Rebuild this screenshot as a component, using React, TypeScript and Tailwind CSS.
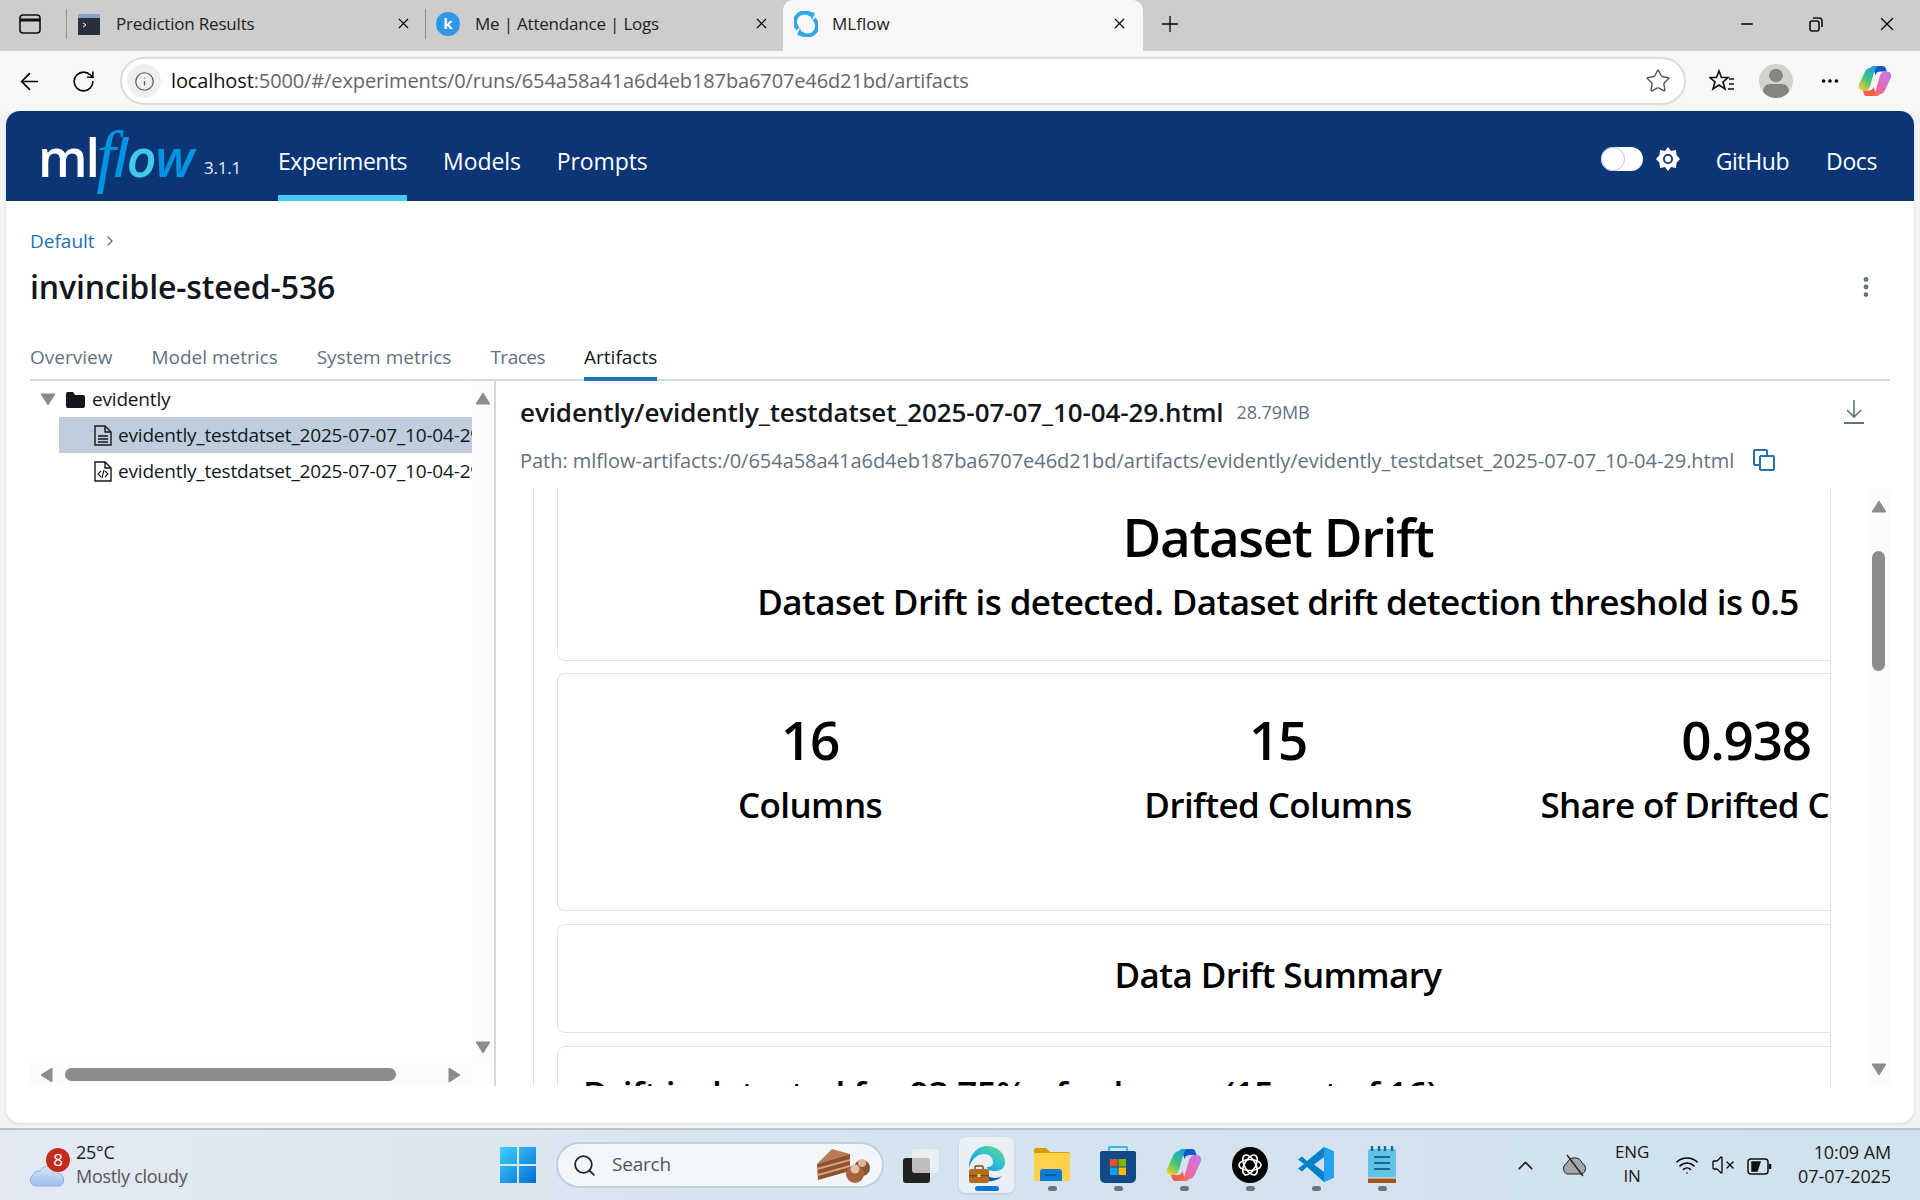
import { ArrowLeft, RotateCw, Info, Star, Plus, X, Minus, MoreHorizontal, Search, ChevronUp, ChevronRight, MoreVertical, Wifi, VolumeX } from "lucide-react";

const font = "font-['Open_Sans',sans-serif]";

const Tri = ({ dir, cls = "" }: { dir: "up" | "down" | "left" | "right"; cls?: string }) => {
  const pts = { up: "0,12 7,1 14,12", down: "0,1 14,1 7,12", left: "12,0 12,14 1,7", right: "1,0 1,14 12,7" }[dir];
  return (
    <svg width="14" height="14" viewBox="0 0 14 14" className={cls}>
      <polygon points={pts} fill="#8c8c8c" stroke="#8c8c8c" strokeLinejoin="round" />
    </svg>
  );
};

const Tab = ({ icon, title, width }: { icon: React.ReactNode; title: string; width: string }) => (
  <div className={`flex items-center h-full pb-[4px] ${width}`}>
    <div className="w-px h-[30px] bg-[#8f8f8f]" />
    <div className="ml-[10px] w-[24px] h-[24px] flex items-center justify-center">{icon}</div>
    <span className="ml-[15px] text-[17px] tracking-[-0.2px] text-[#222]">{title}</span>
    <X className="ml-auto mr-[13px] text-black" size={17} strokeWidth={1.6} />
  </div>
);

const TabStrip = () => (
  <div className="h-[51px] bg-[#cdcdcd] flex items-center shrink-0">
    <div className="w-[66px] flex justify-center pr-[6px] pb-[4px]">
      <svg width="22" height="20" viewBox="0 0 22 20" fill="none" stroke="#111" strokeWidth="1.6">
        <rect x="1" y="1" width="20" height="18" rx="3" />
        <path d="M1 6h20" strokeWidth="3" />
      </svg>
    </div>
    <Tab
      width="w-[359px]"
      title="Prediction Results"
      icon={
        <svg width="24" height="24" viewBox="0 0 24 24">
          <rect x="1" y="2" width="22" height="21" fill="#2b2f3a" />
          <rect x="1" y="2" width="22" height="4" fill="#7fa2d0" />
          <path d="M6 11l3 2-3 2" stroke="#fff" fill="none" />
        </svg>
      }
    />
    <Tab
      width="w-[358px]"
      title="Me | Attendance | Logs"
      icon={
        <div className="w-[24px] h-[24px] rounded-full bg-[#2f97e8] text-white text-[15px] font-bold flex items-center justify-center">k</div>
      }
    />
    <div className="w-[360px] h-full bg-[#f7f7f7] rounded-t-[10px] flex items-center pl-[11px] pb-[4px]">
      <svg width="24" height="26" viewBox="0 0 24 26" fill="none" stroke="#31a8e6" strokeWidth="4">
        <path d="M4 18A9.500 9.500 0 0 1 17 4" />
        <path d="M20 8A9.500 9.500 0 0 1 7 22" />
        <path d="M14 0l7 2-3 7z" fill="#31a8e6" stroke="none" />
        <path d="M10 26l-7-2 3-7z" fill="#31a8e6" stroke="none" />
      </svg>
      <span className="ml-[14px] text-[17px] text-[#222]">MLflow</span>
      <X className="ml-auto mr-[15px] text-black" size={17} strokeWidth={1.6} />
    </div>
    <Plus className="ml-[14px] mb-[4px] text-black" size={26} strokeWidth={1.2} />
    <div className="ml-auto flex items-center pb-[4px]">
      <Minus className="mr-[52px]" size={18} strokeWidth={2} />
      <svg width="16" height="16" viewBox="0 0 16 16" fill="none" stroke="#111" strokeWidth="1.6" className="mr-[52px]">
        <rect x="2" y="5" width="9" height="10" rx="2" />
        <path d="M5 2h6a3 3 0 0 1 3 3v6" />
      </svg>
      <X className="mr-[22px]" size={22} strokeWidth={1.4} />
    </div>
  </div>
);

const CopilotMark = ({ size = 34 }: { size?: number }) => (
  <svg width={size} height={size} viewBox="0 0 36 34">
    <path d="M16 3c1-1.500 3-2 5-2h5c2 0 3 1 3.500 3l1 3H24c-3 0-4.500 1-5.500 4z" fill="#0f56c8" />
    <path d="M13 3c1-1.500 2.500-2 4-2h6c-3 0-4.500 2-5.500 5L13 22c-1 3-3 5-6 5H5c-3 0-5-3-4-6L7 8c1-2.500 3-5 6-5z" fill="url(#cp1)" />
    <path d="M19 31c-1 1.500-2.500 2-4 2H9c-1.500 0-2.500-1-3-3l-1-3h6c3 0 4.500-1 5.500-4z" fill="#f2604a" />
    <path d="M23 31c-1 1.500-2.500 2-4 2h-6c3 0 4.500-2 5.500-5L23 12c1-3 3-5 6-5h2c3 0 5 3 4 6l-6 13c-1 2.500-3 5-6 5z" fill="url(#cp2)" />
  </svg>
);

const AddressRow = () => (
  <div className="h-[60px] bg-[#f7f7f7] flex items-center shrink-0">
    <ArrowLeft className="ml-[16px]" size={27} strokeWidth={1.5} />
    <RotateCw className="ml-[28px]" size={25} strokeWidth={1.5} />
    <div className="ml-[24px] w-[1566px] h-[48px] rounded-full bg-white border-2 border-[#dcdcdc] flex items-center pl-[5px]">
      <div className="w-[34px] h-[34px] rounded-full bg-[#efefef] flex items-center justify-center">
        <Info size={21} strokeWidth={1.4} className="text-[#555]" />
      </div>
      <span className="ml-[10px] text-[20px] tracking-[-0.12px] text-[#666]">
        <span className="text-[#111]">localhost</span>:5000/#/experiments/0/runs/654a58a41a6d4eb187ba6707e46d21bd/artifacts
      </span>
      <Star className="ml-auto mr-[13px] text-[#555]" size={26} strokeWidth={1.3} />
    </div>
    <svg width="26" height="26" viewBox="0 0 26 26" fill="none" stroke="#111" strokeWidth="1.6" className="ml-[23px]">
      <path d="M10 3l2.500 6.500H19l-5 4.500 2 7-6-4-6 4 2-7-5-4.500h6.500z" />
      <path d="M20 11h5M20 16h5M19 21h6" />
    </svg>
    <div className="ml-[24px] w-[34px] h-[34px] rounded-full bg-[#d4d3cf] overflow-hidden flex flex-col items-center">
      <div className="mt-[5px] w-[14px] h-[14px] rounded-full bg-[#86847f]" />
      <div className="mt-[2px] w-[26px] h-[16px] rounded-full bg-[#86847f]" />
    </div>
    <MoreHorizontal className="ml-[26px]" size={22} strokeWidth={2} />
    <div className="ml-[17px]">
      <svg width="0" height="0" className="absolute">
        <defs>
          <linearGradient id="cp1" x1="0.1" y1="1" x2="0.8" y2="0">
            <stop offset="0" stopColor="#f8d120" />
            <stop offset="0.45" stopColor="#3fc47a" />
            <stop offset="1" stopColor="#1a9be8" />
          </linearGradient>
          <linearGradient id="cp2" x1="0.8" y1="0" x2="0.2" y2="1">
            <stop offset="0" stopColor="#c677e6" />
            <stop offset="0.6" stopColor="#e869b4" />
            <stop offset="1" stopColor="#f2704a" />
          </linearGradient>
          <linearGradient id="edg" x1="0" y1="1" x2="1" y2="0">
            <stop offset="0" stopColor="#0c7fd0" />
            <stop offset="0.55" stopColor="#2fc0d8" />
            <stop offset="1" stopColor="#6fdc70" />
          </linearGradient>
          <linearGradient id="wincloud" x1="0" y1="0" x2="0" y2="1">
            <stop offset="0" stopColor="#d6e6fa" />
            <stop offset="1" stopColor="#9cc0ee" />
          </linearGradient>
        </defs>
      </svg>
      <CopilotMark />
    </div>
  </div>
);

const Header = () => (
  <div className="h-[90px] bg-[#0b3574] rounded-t-[14px] flex items-center text-white shrink-0 pl-[32px] pr-[37px]">
    <div className="w-[166px] h-full flex items-center">
      <span className="text-[52px] font-semibold tracking-[-2px] leading-none mt-[2px]">ml</span>
      <span className="text-[70px] italic text-[#0194e2] leading-none font-['Liberation_Serif',serif] -ml-[2px]">f</span>
      <span className="text-[52px] italic font-semibold text-[#0194e2] tracking-[-1.2px] leading-none mt-[2px] -ml-[2px]">
        l<span className="text-[#43c9ed]">o</span>w
      </span>
    </div>
    <span className="text-[17px] mt-[24px] tracking-[-0.2px] text-[#e8eef5]">3.1.1</span>
    <div className="ml-[37px] h-full border-b-[6px] border-[#43c9ed] flex items-center pt-[16px]">
      <span className="text-[23px] tracking-[-0.5px]">Experiments</span>
    </div>
    <span className="ml-[36px] mt-[10px] text-[23px] tracking-[-0.1px]">Models</span>
    <span className="ml-[36px] mt-[10px] text-[23px] tracking-[-0.1px]">Prompts</span>
    <div className="ml-auto mt-[6px] w-[42px] h-[24px] rounded-full bg-white relative">
      <div className="absolute left-0 top-0 w-[24px] h-[24px] rounded-full bg-white border border-[#b9c6d6]" />
    </div>
    <svg width="24" height="24" viewBox="0 0 24 24" className="ml-[13px] mt-[6px]">
      <path d="M12 0l3 4 5-1 .5 5 3.500 4-3.500 4-.5 5-5-1-3 4-3-4-5 1-.5-5L0 12l3.500-4L4 3l5 1z" fill="#fff" />
      <circle cx="12" cy="12" r="5" fill="#0b3574" />
      <circle cx="12" cy="12" r="3.200" fill="#fff" />
    </svg>
    <span className="ml-[36px] mt-[10px] text-[23px] tracking-[-0.4px]">GitHub</span>
    <span className="ml-[37px] mt-[10px] text-[23px] tracking-[-0.4px]">Docs</span>
  </div>
);

const RunTabs = () => (
  <div className="mt-[31px] h-[41px] border-b-2 border-[#d1d9e1] flex text-[19px] text-[#5f7281] shrink-0">
    <span className="mr-[39px] pt-[3px]">Overview</span>
    <span className="mr-[39px] pt-[3px]">Model metrics</span>
    <span className="mr-[39px] pt-[3px]">System metrics</span>
    <span className="mr-[39px] pt-[3px] tracking-[-0.5px]">Traces</span>
    <span className="pt-[3px] h-[41px] border-b-[4px] border-[#2272b4] text-[#11171c] font-medium">Artifacts</span>
  </div>
);

const FileIcon = ({ code }: { code?: boolean }) => (
  <svg width="18" height="21" viewBox="0 0 18 21" fill="none" stroke="#11171c" strokeWidth="1.4" className="shrink-0">
    <path d="M1 1h10l6 6v13H1z" />
    <path d="M11 1v6h6" />
    {code ? <path d="M7 10l-3 3 3 3M11 10l3 3-3 3M10 9l-2 8" strokeWidth="1.100" /> : <path d="M4 11h10M4 14h10M4 17h10" />}
  </svg>
);

const FileRow = ({ selected, code }: { selected?: boolean; code?: boolean }) => (
  <div className={`h-[36px] ml-[29px] pl-[35px] flex items-center overflow-hidden whitespace-nowrap ${selected ? "bg-[#c0cddc]" : ""}`}>
    <FileIcon code={code} />
    <span className="ml-[6px] text-[19px] tracking-[-0.18px] text-[#11171c]">evidently_testdatset_2025-07-07_10-04-29.html</span>
  </div>
);

const TreePane = () => (
  <div className="w-[466px] border-r-2 border-[#d1d9e1] flex flex-col shrink-0">
    <div className="flex-1 flex min-h-0">
      <div className="w-[443px] pt-[1px] min-w-0">
        <div className="h-[35px] flex items-center">
          <Tri dir="down" cls="ml-[11px]" />
          <svg width="19" height="16" viewBox="0 0 19 16" className="ml-[11px]">
            <path d="M0 2a2 2 0 0 1 2-2h5l2 3h8a2 2 0 0 1 2 2v9a2 2 0 0 1-2 2H2a2 2 0 0 1-2-2z" fill="#11171c" />
          </svg>
          <span className="ml-[7px] text-[19px] tracking-[-0.18px] text-[#11171c]">evidently</span>
        </div>
        <FileRow selected />
        <FileRow code />
      </div>
      <div className="w-[22px] bg-[#fcfcfc] flex flex-col items-center justify-between pt-[11px] pb-[8px]">
        <Tri dir="up" />
        <Tri dir="down" />
      </div>
    </div>
    <div className="h-[23px] w-[443px] bg-[#fcfcfc] flex items-center shrink-0">
      <Tri dir="left" cls="ml-[10px]" />
      <div className="ml-[11px] w-[331px] h-[13px] rounded-full bg-[#8c8c8c]" />
      <Tri dir="right" cls="ml-[52px]" />
    </div>
  </div>
);

const Stat = ({ value, label }: { value: string; label: string }) => (
  <div className="flex flex-col items-center whitespace-nowrap">
    <span className="text-[53px] font-semibold leading-[64px] tracking-[-1.2px]">{value}</span>
    <span className="mt-[1px] text-[35px] font-semibold leading-[64px] tracking-[-0.6px]">{label}</span>
  </div>
);

const Report = () => (
  <div className="flex-1 min-w-0 border-x border-[#dee2e6] overflow-hidden pl-[23px] text-black">
    <div className="w-[1442px]">
      <div className="h-[172px] border border-t-0 border-[#dee2e6] rounded-b-[8px] flex flex-col items-center">
        <span className="mt-[14px] text-[53px] font-semibold leading-[68px] tracking-[-1.4px]">Dataset Drift</span>
        <span className="mt-[1px] text-[35px] font-semibold leading-[60px] tracking-[-0.58px]">Dataset Drift is detected. Dataset drift detection threshold is 0.5</span>
      </div>
      <div className="mt-[12px] h-[238px] border border-[#dee2e6] rounded-[8px] px-[18px] pt-[34px] grid grid-cols-3">
        <Stat value="16" label="Columns" />
        <Stat value="15" label="Drifted Columns" />
        <Stat value="0.938" label="Share of Drifted Columns" />
      </div>
      <div className="mt-[13px] h-[109px] border border-[#dee2e6] rounded-[8px] flex items-center justify-center">
        <span className="mb-[6px] text-[35px] font-semibold tracking-[-0.6px]">Data Drift Summary</span>
      </div>
      <div className="mt-[13px] h-[120px] border border-[#dee2e6] rounded-[8px] pl-[25px] pt-[21px]">
        <span className="text-[35px] font-semibold tracking-[-0.55px] whitespace-nowrap">Drift is detected for 93.75% of columns (15 out of 16).</span>
      </div>
    </div>
  </div>
);

const ArtifactPane = () => (
  <div className="flex-1 min-w-0 flex flex-col pl-[24px]">
    <div className="h-[59px] flex items-center shrink-0 pt-[3px]">
      <span className="text-[26px] font-semibold tracking-[-0.1px] text-[#11171c] whitespace-nowrap">evidently/evidently_testdatset_2025-07-07_10-04-29.html</span>
      <span className="ml-[13px] text-[18px] tracking-[-0.1px] text-[#5f7281]">28.79MB</span>
      <svg width="24" height="26" viewBox="0 0 24 26" fill="none" stroke="#5f7281" strokeWidth="1.6" className="ml-auto mr-[24px]">
        <path d="M12 1v16M5 11l7 7 7-7" />
        <path d="M2 24h20" strokeWidth="2" />
      </svg>
    </div>
    <div className="h-[49px] flex items-center shrink-0 pb-[8px]">
      <span className="text-[20px] tracking-[-0.03px] text-[#5f7281] whitespace-nowrap">Path: mlflow-artifacts:/0/654a58a41a6d4eb187ba6707e46d21bd/artifacts/evidently/evidently_testdatset_2025-07-07_10-04-29.html</span>
      <svg width="22" height="22" viewBox="0 0 22 22" fill="none" stroke="#2272b4" strokeWidth="2" className="ml-[19px] mb-[2px]">
        <path d="M6 16H2a1 1 0 0 1-1-1V2a1 1 0 0 1 1-1h11a1 1 0 0 1 1 1v4" />
        <rect x="7" y="7" width="14" height="14" rx="1" />
      </svg>
    </div>
    <div className="flex-1 min-h-0 flex ml-[13px]">
      <Report />
      <div className="ml-[36px] w-[23px] bg-[#fcfcfc] flex flex-col items-center pt-[11px] pb-[9px]">
        <Tri dir="up" />
        <div className="mt-[37px] w-[13px] h-[120px] rounded-full bg-[#8c8c8c]" />
        <Tri dir="down" cls="mt-auto" />
      </div>
    </div>
  </div>
);

const AppSlot = ({ children, active }: { children: React.ReactNode; active?: boolean }) => (
  <div className={`h-[56px] flex flex-col items-center relative rounded-[6px] ${active ? "bg-[#e8f0f6] w-[55px] mr-[5px] shadow-sm" : "w-[66px]"}`}>
    <div className="mt-[9px] h-[37px] flex items-center justify-center">{children}</div>
    <div className={`absolute bottom-[2px] rounded-full ${active ? "w-[24px] h-[5px] bg-[#0a78d7]" : "w-[9px] h-[5px] bg-[#6e767c]"}`} />
  </div>
);

const Taskbar = () => (
  <div className="h-[72px] border-t-2 border-[#b8c4cc] bg-gradient-to-r from-[#e4e9f3] via-[#d3e4ef] to-[#d0e2ee] flex items-center shrink-0">
    <div className="w-[500px] flex items-center shrink-0 relative">
      <svg width="38" height="28" viewBox="0 0 38 28" className="ml-[29px] mt-[18px]">
        <circle cx="31" cy="6" r="5" fill="#ef8a1c" />
        <path d="M7 26a6 6 0 0 1-3-11 6 6 0 0 1 7-4 10 10 0 0 1 18 2 7 7 0 0 1 2 13z" fill="url(#wincloud)" stroke="#8fb2e2" />
      </svg>
      <div className="absolute left-[46px] top-[8px] w-[24px] h-[24px] rounded-full bg-[#c42b1c] text-white text-[17px] flex items-center justify-center">8</div>
      <div className="ml-[9px] mb-[2px] flex flex-col leading-[24px]">
        <span className="text-[18px] tracking-[-0.3px] text-[#1a1a1a]">25°C</span>
        <span className="text-[18px] tracking-[-0.3px] text-[#555]">Mostly cloudy</span>
      </div>
    </div>
    <svg width="36" height="36" viewBox="0 0 36 36" className="shrink-0">
      <defs>
        <linearGradient id="win" x1="0" y1="0" x2="1" y2="1">
          <stop offset="0" stopColor="#3fd0fb" />
          <stop offset="1" stopColor="#0070d4" />
        </linearGradient>
      </defs>
      <path d="M0 0h17v17H0zM19 0h17v17H19zM0 19h17v17H0zM19 19h17v17H19z" fill="url(#win)" />
    </svg>
    <div className="ml-[20px] w-[328px] h-[46px] rounded-full bg-[#f1f6fa] border-2 border-[#bed0dc] flex items-center pl-[14px] shrink-0">
      <Search size={25} strokeWidth={1.7} className="text-[#222]" />
      <span className="ml-[15px] mb-[1px] text-[19px] tracking-[-0.2px] text-[#555]">Search</span>
      <svg width="56" height="36" viewBox="0 0 56 36" className="ml-auto mr-[11px]">
        <path d="M17 2l18 5L2 17z" fill="#b97a55" />
        <path d="M2 17L35 7v17L3 33z" fill="#8d5230" />
        <path d="M2 22l33-9M3 28l32-9" stroke="#d9a07a" strokeWidth="2" />
        <circle cx="47" cy="21" r="8" fill="#8d5230" />
        <circle cx="47" cy="16" r="4" fill="#d9b59a" />
        <circle cx="40" cy="27" r="9" fill="#a5633d" />
        <circle cx="40" cy="22" r="4.500" fill="#e2c3aa" />
      </svg>
    </div>
    <svg width="36" height="34" viewBox="0 0 36 34" className="ml-[19px] mt-[1px] shrink-0">
      <rect x="0" y="9" width="27" height="25" rx="3" fill="#232323" />
      <rect x="9" y="0" width="27" height="24" rx="3" fill="#f2f2f2" fillOpacity="0.75" />
    </svg>
    <div className="ml-[20px] flex items-center shrink-0">
      <AppSlot active>
        <svg width="38" height="37" viewBox="0 0 38 37">
          <path d="M1 22C1 9 9 0 19 0c11 0 18 8 18 16 0 6-4 9-10 9-4 0-8-1-8-4 4 0 6-2 6-5 0-5-4-8-9-8C9 8 3 14 1 22z" fill="url(#edg)" />
          <path d="M16 22c1 8 8 13 18 8-5 5-13 7-20 3-1-3 0-8 2-11z" fill="#0c59a4" />
          <path d="M7 23v-2a1 1 0 0 1 1-1h6a1 1 0 0 1 1 1v2" fill="none" stroke="#7a4a14" strokeWidth="1.500" />
          <rect x="1" y="23" width="20" height="14" rx="2" fill="#b46a1f" />
          <rect x="1" y="29" width="20" height="1.500" fill="#7a4a14" />
          <rect x="9.500" y="28" width="3" height="3" fill="#f4d35e" />
        </svg>
      </AppSlot>
      <AppSlot>
        <svg width="36" height="33" viewBox="0 0 36 33">
          <path d="M0 2a2 2 0 0 1 2-2h10l4 4h18a2 2 0 0 1 2 2v6H0z" fill="#d99c00" />
          <rect x="0" y="5" width="36" height="28" rx="2" fill="#ffd24d" />
          <path d="M6 33v-9a3 3 0 0 1 3-3h16a3 3 0 0 1 3 3v9z" fill="#0b7dd4" />
          <rect x="11" y="26" width="12" height="2" fill="#0a5a9c" />
        </svg>
      </AppSlot>
      <AppSlot>
        <svg width="36" height="37" viewBox="0 0 36 37">
          <path d="M9 6V2a1 1 0 0 1 1-1h16a1 1 0 0 1 1 1v4" fill="none" stroke="#37b6e8" strokeWidth="2" />
          <path d="M0 7a2 2 0 0 1 2-2h32a2 2 0 0 1 2 2v25a5 5 0 0 1-5 5H5a5 5 0 0 1-5-5z" fill="#114a86" />
          <path d="M10 13h7.500v7.500H10z" fill="#e8502e" />
          <path d="M18.500 13H26v7.500h-7.500z" fill="#7fba00" />
          <path d="M10 21.500h7.500V29H10z" fill="#00a4ef" />
          <path d="M18.500 21.500H26V29h-7.500z" fill="#ffb900" />
        </svg>
      </AppSlot>
      <AppSlot>
        <CopilotMark size={36} />
      </AppSlot>
      <AppSlot>
        <svg width="36" height="36" viewBox="0 0 36 36">
          <circle cx="18" cy="18" r="18" fill="#000" />
          <g fill="none" stroke="#fff" strokeWidth="1.600">
            <ellipse cx="18" cy="18" rx="11" ry="5.500" />
            <ellipse cx="18" cy="18" rx="11" ry="5.500" transform="rotate(60 18 18)" />
            <ellipse cx="18" cy="18" rx="11" ry="5.500" transform="rotate(120 18 18)" />
          </g>
        </svg>
      </AppSlot>
      <AppSlot>
        <svg width="36" height="37" viewBox="0 0 36 37">
          <path d="M26 1l10 4.500v26L26 36 9 21l-5 4.500-4-3 6-4.500-6-4.500 4-3 5 4.500z" fill="#0a7fcc" />
          <path d="M26 11v15l-10-7.500z" fill="#d0e2ee" />
          <path d="M26 1l10 4.500v26L26 36z" fill="#23a3ec" />
        </svg>
      </AppSlot>
      <AppSlot>
        <svg width="28" height="37" viewBox="0 0 28 37">
          <rect x="0" y="3" width="28" height="30" rx="2" fill="#62c4e4" />
          <path d="M0 32h28v5H0z" fill="#a5521d" />
          <path d="M0 32h28" stroke="#f0ece4" strokeWidth="1" />
          <path d="M4 0v5M11 0v5M17 0v5M24 0v5" stroke="#12688f" strokeWidth="2.400" />
          <path d="M6 11h16M6 17h16M6 23h16" stroke="#12688f" strokeWidth="2.200" />
        </svg>
      </AppSlot>
    </div>
    <div className="ml-auto flex items-center pr-[29px] shrink-0">
      <ChevronUp size={25} strokeWidth={1.6} className="text-[#222]" />
      <svg width="26" height="24" viewBox="0 0 26 24" className="ml-[24px]">
        <path d="M5 21a6 6 0 0 1 0-11 8 8 0 0 1 15 0 6 6 0 0 1 0 11z" fill="#a5a5a5" stroke="#222" />
        <path d="M5 2l16 21" stroke="#222" strokeWidth="1.400" />
      </svg>
      <div className="ml-[24px] w-[40px] mb-[2px] flex flex-col items-center leading-[24px] text-[17px] tracking-[-0.2px] text-[#1a1a1a]">
        <span>ENG</span>
        <span>IN</span>
      </div>
      <Wifi className="ml-[23px]" size={24} strokeWidth={1.6} />
      <VolumeX className="ml-[12px]" size={24} strokeWidth={1.3} />
      <svg width="26" height="24" viewBox="0 0 26 24" fill="none" stroke="#111" strokeWidth="1.500" className="ml-[11px]">
        <rect x="2" y="6" width="20" height="15" rx="3" />
        <path d="M24 11v5" strokeWidth="2.500" />
        <path d="M6 18V9h8l-3 9z" fill="#111" />
      </svg>
      <div className="ml-[26px] mb-[2px] flex flex-col items-end leading-[24px] text-[18px] tracking-[-0.1px] text-[#1a1a1a]">
        <span>10:09 AM</span>
        <span>07-07-2025</span>
      </div>
    </div>
  </div>
);

export default function App() {
  return (
    <div className={`w-[1920px] h-[1200px] overflow-hidden flex flex-col bg-[#f3f3f3] ${font}`}>
      <TabStrip />
      <AddressRow />
      <div className="mx-[6px] flex-1 min-h-0 bg-white rounded-[14px] shadow-sm flex flex-col">
        <Header />
        <div className="px-[24px] flex-1 min-h-0 flex flex-col pb-[37px]">
          <div className="mt-[27px] h-[26px] flex items-center text-[19px] text-[#2272b4] shrink-0">
            Default
            <ChevronRight size={16} className="ml-[7px] text-[#5f7281]" />
          </div>
          <div className="mt-[11px] h-[44px] flex items-center shrink-0">
            <span className="text-[32px] font-semibold tracking-[-0.15px] text-[#11171c]">invincible-steed-536</span>
            <MoreVertical className="ml-auto mr-[11px] text-[#5f7281]" size={26} strokeWidth={2.5} />
          </div>
          <RunTabs />
          <div className="flex-1 min-h-0 flex">
            <TreePane />
            <ArtifactPane />
          </div>
        </div>
      </div>
      <div className="h-[5px] shrink-0" />
      <Taskbar />
    </div>
  );
}
